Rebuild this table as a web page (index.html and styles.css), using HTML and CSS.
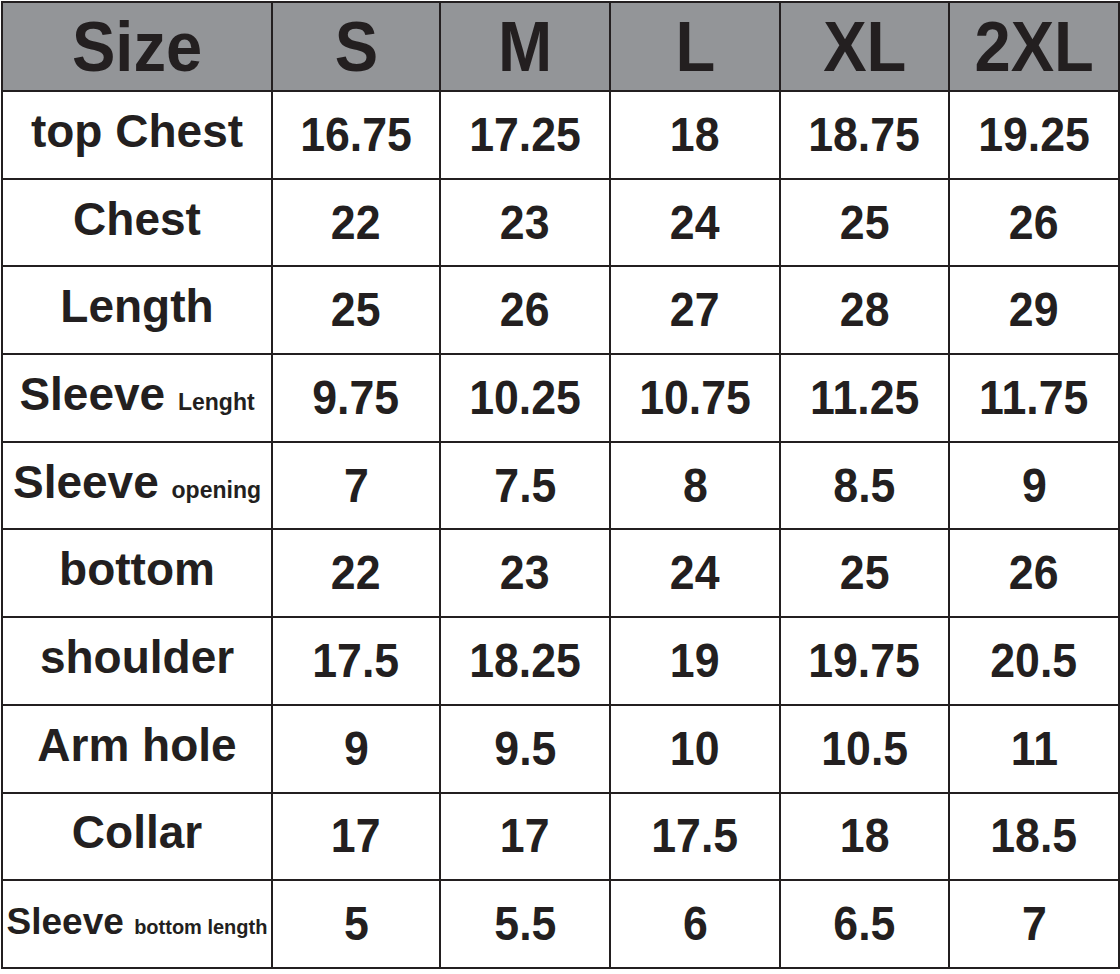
FILE: index.html
```html
<!DOCTYPE html>
<html>
<head>
<meta charset="utf-8">
<link rel="stylesheet" href="styles.css">
</head>
<body>
<table class="chart">
  <colgroup>
    <col class="c-label"><col class="c-s"><col class="c-m"><col class="c-l"><col class="c-xl"><col class="c-2xl">
  </colgroup>
  <thead>
    <tr class="head">
      <th><span class="t">Size</span></th>
      <th><span class="t">S</span></th>
      <th><span class="t">M</span></th>
      <th><span class="t">L</span></th>
      <th><span class="t">XL</span></th>
      <th><span class="t">2XL</span></th>
    </tr>
  </thead>
  <tbody>
    <tr><td class="lab"><span class="lt">top Chest</span></td><td><span class="t">16.75</span></td><td><span class="t">17.25</span></td><td><span class="t">18</span></td><td><span class="t">18.75</span></td><td><span class="t">19.25</span></td></tr>
    <tr><td class="lab"><span class="lt">Chest</span></td><td><span class="t">22</span></td><td><span class="t">23</span></td><td><span class="t">24</span></td><td><span class="t">25</span></td><td><span class="t">26</span></td></tr>
    <tr><td class="lab"><span class="lt">Length</span></td><td><span class="t">25</span></td><td><span class="t">26</span></td><td><span class="t">27</span></td><td><span class="t">28</span></td><td><span class="t">29</span></td></tr>
    <tr><td class="lab"><span class="lt">Sleeve <small class="sub">Lenght</small></span></td><td><span class="t">9.75</span></td><td><span class="t">10.25</span></td><td><span class="t">10.75</span></td><td><span class="t">11.25</span></td><td><span class="t">11.75</span></td></tr>
    <tr><td class="lab"><span class="lt">Sleeve <small class="sub">opening</small></span></td><td><span class="t">7</span></td><td><span class="t">7.5</span></td><td><span class="t">8</span></td><td><span class="t">8.5</span></td><td><span class="t">9</span></td></tr>
    <tr><td class="lab"><span class="lt">bottom</span></td><td><span class="t">22</span></td><td><span class="t">23</span></td><td><span class="t">24</span></td><td><span class="t">25</span></td><td><span class="t">26</span></td></tr>
    <tr><td class="lab"><span class="lt">shoulder</span></td><td><span class="t">17.5</span></td><td><span class="t">18.25</span></td><td><span class="t">19</span></td><td><span class="t">19.75</span></td><td><span class="t">20.5</span></td></tr>
    <tr><td class="lab"><span class="lt">Arm hole</span></td><td><span class="t">9</span></td><td><span class="t">9.5</span></td><td><span class="t">10</span></td><td><span class="t">10.5</span></td><td><span class="t">11</span></td></tr>
    <tr><td class="lab"><span class="lt">Collar</span></td><td><span class="t">17</span></td><td><span class="t">17</span></td><td><span class="t">17.5</span></td><td><span class="t">18</span></td><td><span class="t">18.5</span></td></tr>
    <tr><td class="lab lab-small"><span class="lt">Sleeve <small class="sub sub-small">bottom length</small></span></td><td><span class="t">5</span></td><td><span class="t">5.5</span></td><td><span class="t">6</span></td><td><span class="t">6.5</span></td><td><span class="t">7</span></td></tr>
  </tbody>
</table>
</body>
</html>
```

FILE: styles.css
```css
html, body {
  margin: 0;
  padding: 0;
  background: #ffffff;
}

body {
  font-family: "Liberation Sans", Arial, sans-serif;
  color: #231f20;
}

.chart {
  margin: 1px 0 0 1px;
  border-collapse: collapse;
  table-layout: fixed;
  width: 1117px;
}

.c-label { width: 270px; }
.c-s { width: 168px; }
.c-m { width: 170px; }
.c-l { width: 170px; }
.c-xl { width: 169px; }
.c-2xl { width: 170px; }

.chart th,
.chart td {
  border: 2.5px solid #231f20;
  padding: 0;
  text-align: center;
  vertical-align: middle;
  font-weight: bold;
  white-space: nowrap;
  line-height: 1;
}

.head th {
  background: #939598;
  height: 87px;
  font-size: 70px;
}

.chart td {
  height: 85.7px;
  font-size: 48px;
}

.chart td.lab {
  font-size: 46px;
  padding-bottom: 8px;
  height: 77.7px;
}

.t {
  display: inline-block;
  transform: scaleX(0.93);
}

.lt {
  display: inline-block;
}

.sub {
  font-size: 23px;
}

.chart td.lab-small {
  font-size: 37px;
  padding-bottom: 6px;
  height: 79.7px;
}

.sub-small {
  font-size: 20px;
}
```
